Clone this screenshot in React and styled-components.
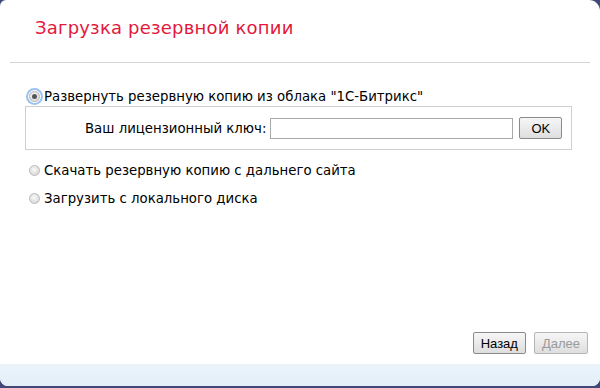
import styled, { createGlobalStyle } from 'styled-components'

const Global = createGlobalStyle`
    html, body {
        margin: 0;
        padding: 0;
        background: #3f4877;
    }
    body {
        font-family: "DejaVu Sans", Verdana, sans-serif;
    }
`

const options = [
    { id: 'cloud', label: 'Развернуть резервную копию из облака "1С-Битрикс"', checked: true },
    { id: 'remote', label: 'Скачать резервную копию с дальнего сайта' },
    { id: 'local', label: 'Загрузить с локального диска' },
]

export default function App() {
    return (
        <>
            <Global />
            <Dialog>
                <Header>
                    <Title>Загрузка резервной копии</Title>
                </Header>
                <Body>
                    <Option>
                        <Radio checked={options[0].checked} focused />
                        <OptionLabel>{options[0].label}</OptionLabel>
                    </Option>
                    <KeyBox>
                        <KeyLabel>Ваш лицензионный ключ:</KeyLabel>
                        <KeyInput />
                        <Button wide>OK</Button>
                    </KeyBox>
                    {options.slice(1).map(o => (
                        <Option key={o.id} spaced>
                            <Radio />
                            <OptionLabel>{o.label}</OptionLabel>
                        </Option>
                    ))}
                </Body>
                <Actions>
                    <Button>Назад</Button>
                    <Button disabled>Далее</Button>
                </Actions>
                <Footer />
            </Dialog>
        </>
    )
}

const Dialog = styled.div`
    width: 600px;
    height: 386px;
    background: #fff;
    border-radius: 6px 11px 8px 8px;
    overflow: hidden;
    display: flex;
    flex-direction: column;
`

const Header = styled.div`
    margin: 0 10px;
    height: 63px;
    border-bottom: 1px solid #d4d4d4;
    box-sizing: border-box;
    padding: 17px 0 0 25px;
`

const Title = styled.h1`
    margin: 0;
    font-size: 18px;
    font-weight: 400;
    color: #e3183b;
    letter-spacing: 0.2px;
`

const Body = styled.div`
    flex: 1;
    padding: 25px 0 0 25px;
    font-size: 13.3px;
`

const Option = styled.label`
    display: flex;
    align-items: center;
    gap: 4px;
    margin-top: ${props => props.spaced ? '12px' : '0'};
    margin-left: 4px;
    height: 16px;
    color: #000;
`

const Radio = styled.span`
    width: 11px;
    height: 11px;
    border-radius: 50%;
    box-sizing: border-box;
    border: 1px solid #b9b9b9;
    background: radial-gradient(circle at 45% 40%, #fafafa 0%, #dcdcdc 70%, #cfcfcf 100%);
    position: relative;
    flex-shrink: 0;
    ${props => props.focused && 'box-shadow: 0 0 0 1px #fff, 0 0 0 3px #9cc2ef;'}

    &::after {
        content: '';
        display: ${props => props.checked ? 'block' : 'none'};
        position: absolute;
        left: 2px;
        top: 2px;
        width: 5px;
        height: 5px;
        border-radius: 50%;
        background: #555;
    }
`

const OptionLabel = styled.span`
    white-space: nowrap;
`

const KeyBox = styled.div`
    width: 547px;
    height: 44px;
    box-sizing: border-box;
    border: 1px solid #cfcfcf;
    margin-top: 2px;
    display: flex;
    align-items: center;
    padding: 0 0 0 59px;
`

const KeyLabel = styled.span`
    margin-right: 4px;
    white-space: nowrap;
`

const KeyInput = styled.input`
    width: 243px;
    height: 21px;
    box-sizing: border-box;
    border: 1px solid #a9a9a9;
    padding: 0 3px;
    margin: 0 6px 0 0;
    font: inherit;
`

const Button = styled.button`
    height: 22px;
    padding: 0 ${props => props.wide ? '11px' : '7px'};
    box-sizing: border-box;
    border: 1px solid #8a8a8a;
    border-radius: 2px;
    background: linear-gradient(#f6f6f6, #dedede);
    font-family: "Liberation Sans", Arial, sans-serif;
    font-size: 13px;
    color: ${props => props.disabled ? '#9a9a9a' : '#000'};
    border-color: ${props => props.disabled ? '#b5b5b5' : '#8a8a8a'};
    cursor: default;
`

const Actions = styled.div`
    display: flex;
    justify-content: flex-end;
    gap: 8px;
    padding: 0 12px 10px 0;
`

const Footer = styled.div`
    height: 22px;
    background: linear-gradient(#ebf4fb, #e3eef8);
`
